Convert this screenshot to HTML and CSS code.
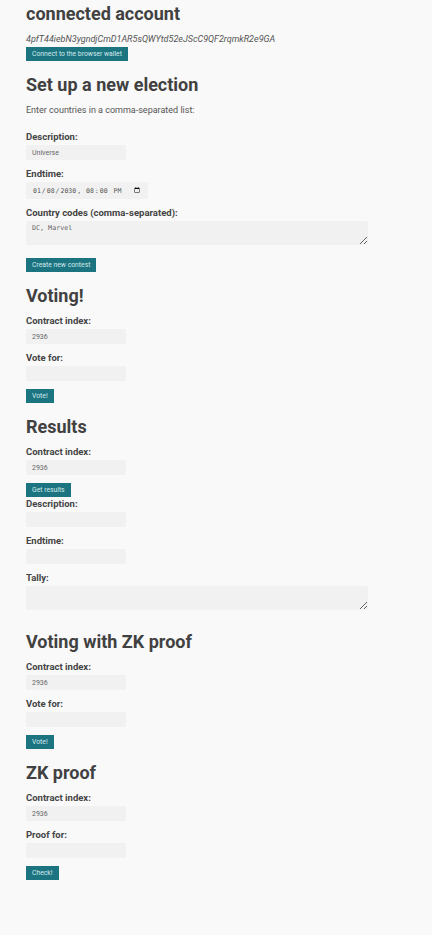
FILE: index.html
```html
<!DOCTYPE html>
<html lang="en">
<head>
<meta charset="utf-8">
<title>Election</title>
<link rel="stylesheet" href="styles.css">
</head>
<body>
<main class="page">
  <section class="block block-account">
    <h1 class="heading">connected account</h1>
    <p class="address">4pfT44iebN3ygndjCmD1AR5sQWYtd52eJScC9QF2rqmkR2e9GA</p>
    <button class="btn btn-first" type="button">Connect to the browser wallet</button>
  </section>

  <section class="block block-setup">
    <h2 class="heading">Set up a new election</h2>
    <p class="intro">Enter countries in a comma-separated list:</p>
    <div class="field">
      <label class="label">Description:</label>
      <input class="input" type="text" value="Universe">
    </div>
    <div class="field">
      <label class="label">Endtime:</label>
      <input class="input input-date" type="datetime-local" value="2030-01-08T20:00">
    </div>
    <div class="field">
      <label class="label">Country codes (comma-separated):</label>
      <textarea class="textarea">DC, Marvel</textarea>
    </div>
    <button class="btn btn-gap" type="button">Create new contest</button>
  </section>

  <section class="block">
    <h2 class="heading">Voting!</h2>
    <div class="field">
      <label class="label">Contract index:</label>
      <input class="input" type="text" value="2936">
    </div>
    <div class="field">
      <label class="label">Vote for:</label>
      <input class="input" type="text" value="">
    </div>
    <button class="btn" type="button">Vote!</button>
  </section>

  <section class="block">
    <h2 class="heading">Results</h2>
    <div class="field">
      <label class="label">Contract index:</label>
      <input class="input" type="text" value="2936">
    </div>
    <button class="btn" type="button">Get results</button>
    <div class="field">
      <label class="label">Description:</label>
      <input class="input" type="text" value="">
    </div>
    <div class="field">
      <label class="label">Endtime:</label>
      <input class="input" type="text" value="">
    </div>
    <div class="field">
      <label class="label">Tally:</label>
      <textarea class="textarea"></textarea>
    </div>
  </section>

  <section class="block block-zk">
    <h2 class="heading">Voting with ZK proof</h2>
    <div class="field">
      <label class="label">Contract index:</label>
      <input class="input" type="text" value="2936">
    </div>
    <div class="field">
      <label class="label">Vote for:</label>
      <input class="input" type="text" value="">
    </div>
    <button class="btn" type="button">Vote!</button>
  </section>

  <section class="block">
    <h2 class="heading">ZK proof</h2>
    <div class="field">
      <label class="label">Contract index:</label>
      <input class="input" type="text" value="2936">
    </div>
    <div class="field">
      <label class="label">Proof for:</label>
      <input class="input" type="text" value="">
    </div>
    <button class="btn" type="button">Check!</button>
  </section>
</main>
</body>
</html>
```
FILE: styles.css
```css
html, body {
  margin: 0;
  padding: 0;
  background: #f9f9f9;
}

body {
  font-family: Roboto, "Liberation Sans", sans-serif;
  color: #444;
}

.page {
  display: flex;
  flex-direction: column;
  padding: 3px 26px 40px;
}

.block {
  display: flex;
  flex-direction: column;
  align-items: flex-start;
  margin-top: 13px;
}

.block-account {
  margin-top: 0;
}

.heading {
  margin: 0 0 7px;
  font-size: 18px;
  line-height: 22px;
  font-weight: 700;
  color: #414141;
}

.address {
  margin: 1px 0 2px;
  font-size: 9px;
  line-height: 12px;
  font-style: italic;
  color: #555;
}

.intro {
  margin: 0 0 12px;
  font-size: 9px;
  line-height: 15px;
  color: #555;
}

.field {
  display: flex;
  flex-direction: column;
  align-items: stretch;
  margin-bottom: 7px;
}

.label {
  font-size: 9.5px;
  line-height: 14px;
  font-weight: 700;
  color: #444;
}

.input {
  box-sizing: border-box;
  width: 100px;
  height: 15px;
  margin: 1px 0 0;
  padding: 0 6px;
  border: none;
  border-radius: 2px;
  background: #f1f1f1;
  font-family: Roboto, "Liberation Sans", sans-serif;
  font-size: 7px;
  color: #666;
  outline: none;
}

.input-date {
  width: 122px;
  height: 17px;
  font-family: "DejaVu Sans Mono", monospace;
  font-size: 6.5px;
  color: #555;
}

.textarea {
  box-sizing: border-box;
  width: 342px;
  height: 24px;
  margin: 1px 0 0;
  padding: 3px 6px;
  border: none;
  border-radius: 2px;
  background: #f1f1f1;
  font-family: "DejaVu Sans Mono", monospace;
  font-size: 6.7px;
  line-height: 9px;
  color: #666;
  outline: none;
}

.btn {
  box-sizing: border-box;
  height: 14px;
  margin: 1px 0 0;
  padding: 0 6px;
  border: none;
  border-radius: 0;
  background: #1c7480;
  color: #d3eaee;
  font-family: Roboto, "Liberation Sans", sans-serif;
  font-size: 6.8px;
  line-height: 14px;
  cursor: pointer;
}

.btn-first {
  margin-top: 0;
}

.btn-gap {
  margin-top: 6px;
}

.block-zk {
  margin-top: 14px;
}
```
